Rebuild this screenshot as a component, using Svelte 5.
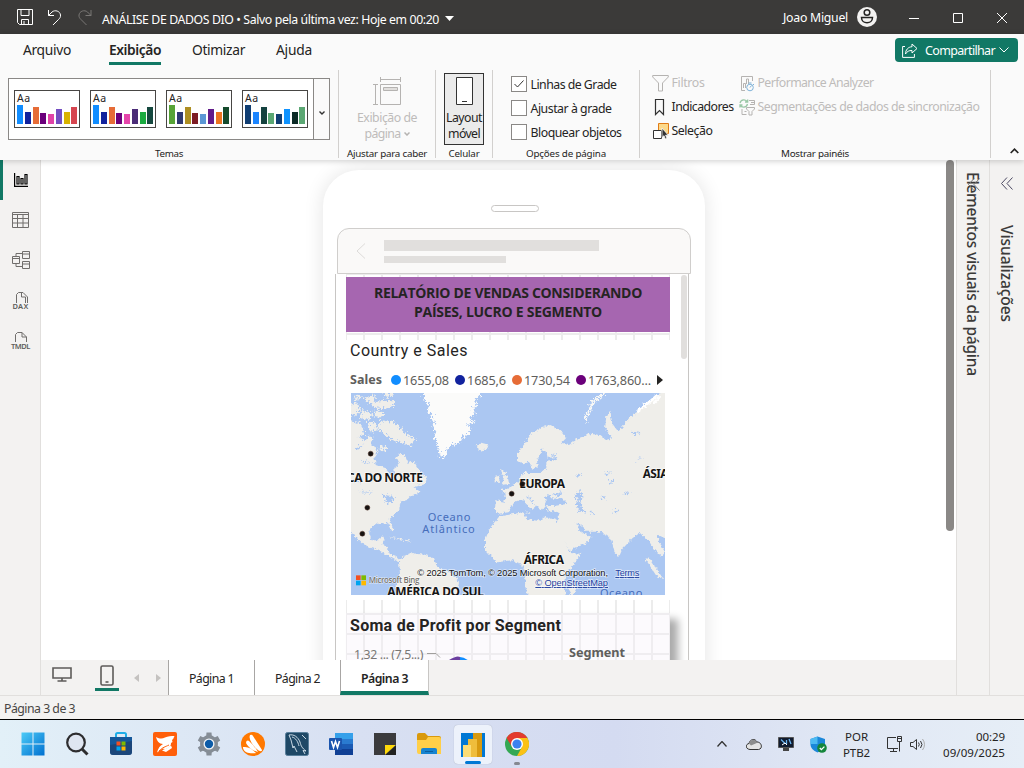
<script>
  // Spreads the letters of a label so that it takes up the given length.
  function fit(node, length) {
    const box = node.getBoundingClientRect();
    const natural = Math.max(box.width, box.height);
    node.style.letterSpacing = (length - natural) / node.textContent.length + 'px';
  }

  const themes = [
    { name: 'a', bars: [['#118dff', 19], ['#12239e', 12], ['#e66c37', 17], ['#6b007b', 11], ['#e044a7', 10], ['#744ec2', 15], ['#d9b300', 12], ['#d64550', 17]] },
    { name: 'b', bars: [['#118dff', 19], ['#12239e', 12], ['#e66c37', 17], ['#6b007b', 11], ['#e645ab', 10], ['#4b2c78', 15], ['#1aab40', 12], ['#15483f', 17]] },
    { name: 'c', bars: [['#57a336', 19], ['#2f3871', 12], ['#ad8e22', 17], ['#7d1c24', 11], ['#5b97d5', 10], ['#621b8a', 15], ['#ec7420', 12], ['#154a2c', 17]] },
    { name: 'd', bars: [['#113e72', 19], ['#1b85ff', 12], ['#15423f', 17], ['#5ba773', 11], ['#113e72', 10], ['#1093ff', 15], ['#0c2b27', 12], ['#5ba773', 17]] }
  ];
  const options = [['Linhas de Grade', 86, true], ['Ajustar à grade', 81, false], ['Bloquear objetos', 91, false]];
  const legend = [['#118dff', '1655,08', 46, 64], ['#12239e', '1685,6', 39, 57], ['#e66c37', '1730,54', 46, 64], ['#6b007b', '1763,860...', 63, 76]];
  const pages = [['Página 1', 86], ['Página 2', 86], ['Página 3', 89]];
</script>

<div class="app">
  <header class="title">
    <div class="quick">
      <svg width="16" height="16" viewBox="0 0 16 16" class="st w"><path d="M.5.5h15v15H2.500l-2-2zM4 .5v6h8v-6M4.500 15.500v-5h7v5M7 15v-3"/></svg>
      <svg width="16" height="17" viewBox="0 0 16 17" class="st w"><path d="M1.500 1v5.500H7M1.500 6.500 5 3c3-2.500 8-1 8.500 3 .2 2-.5 3-2 4.500L6 16"/></svg>
      <svg width="16" height="17" viewBox="0 0 16 17" class="st dim"><path d="M14 1v5.500H8.500M14 6.500 10.500 3c-3-2.500-8-1-8.500 3-.2 2 .5 3 2 4.500L9.500 16"/></svg>
    </div>
    <span class="doc" use:fit={337}>ANÁLISE DE DADOS DIO • Salvo pela última vez: Hoje em 00:20</span>
    <svg class="caret" width="9" height="5" viewBox="0 0 9 5"><path d="M0 0h9L4.500 5z" fill="#fff"/></svg>
    <span class="user" use:fit={65}>Joao Miguel</span>
    <svg class="avatar" width="20" height="20" viewBox="0 0 20 20"><circle cx="10" cy="10" r="10" fill="#f3f2f1"/><g fill="none" stroke="#252423" stroke-width="1.500"><circle cx="10" cy="5.500" r="2.800"/><path d="M4.500 10.500h11c0 7-11 7-11 0z"/></g></svg>
    <div class="wins">
      <svg width="10" height="10" class="st w"><path d="M0 5.500h10"/></svg>
      <svg width="10" height="10" class="st w"><path d="M.5.5h9v9h-9z"/></svg>
      <svg width="10" height="10" class="st w"><path d="m0 0 10 10M10 0 0 10"/></svg>
    </div>
  </header>

  <section class="ribbon">
    <nav>
      <span class="tab"><i use:fit={48}>Arquivo</i></span>
      <span class="tab on"><i use:fit={52}>Exibição</i></span>
      <span class="tab"><i use:fit={53}>Otimizar</i></span>
      <span class="tab"><i use:fit={36}>Ajuda</i></span>
      <button class="share">
        <svg width="16" height="15" viewBox="0 0 16 15" class="st w"><path d="M3 3.500H.6v10.900h11.800V11M10 1l5 4.500-5 4.500V7.500C7 7.300 5 8.500 3.500 11c0-4 2.500-7 6.500-7.300z"/></svg>
        <i use:fit={70}>Compartilhar</i>
        <svg width="10" height="6" viewBox="0 0 10 6" class="st w"><path d="m.5.5 4.500 4.500L9.500.5"/></svg>
      </button>
    </nav>
    <div class="groups">
      <div class="group g1">
        <div class="gallery">
          {#each themes as t (t.name)}
            <div class="theme">
              <span>Aa</span>
              <div class="bars">{#each t.bars as b}<b style="height:{b[1]}px;background:{b[0]}"></b>{/each}</div>
            </div>
          {/each}
          <div class="more"><svg width="6" height="4" viewBox="0 0 6 4" class="st k"><path d="m.5.5 2.500 2.500L5.500.5" stroke-width="1.400"/></svg></div>
        </div>
        <small><i use:fit={28}>Temas</i></small>
      </div>
      <div class="group g2">
        <svg width="30" height="30" viewBox="0 0 30 30" class="st off"><path d="M8.500 9.500h20v20h-20zM3.500 9.500v20M1 9.500h5M1 29.500h5M8.500 4.500h20M8.500 2v5M28.500 2v5"/><path d="M11.500 12.500h14v3h-14z" fill="#e1dfdd"/></svg>
        <i class="faded" use:fit={60}>Exibição de</i>
        <div class="faded line2"><i use:fit={36}>página</i><svg width="6" height="4" viewBox="0 0 6 4" class="st off"><path d="m.5.5 2.500 2.500L5.500.5" stroke-width="1.500"/></svg></div>
        <small><i use:fit={80}>Ajustar para caber</i></small>
      </div>
      <div class="group g3">
        <div class="pressed">
          <svg width="17" height="28" viewBox="0 0 17 28" class="st k"><path d="M.5.500h16v27H.5zM6 24.500h5" fill="#fff"/></svg>
          <i use:fit={36}>Layout</i>
          <i use:fit={32}>móvel</i>
        </div>
        <small><i use:fit={31}>Celular</i></small>
      </div>
      <div class="group g4">
        {#each options as o}
          <label><em>{#if o[2]}<svg width="10" height="8" viewBox="0 0 10 8" class="st k"><path d="m.5 4 3 3L9.500.5"/></svg>{/if}</em><i use:fit={o[1]}>{o[0]}</i></label>
        {/each}
        <small><i use:fit={80}>Opções de página</i></small>
      </div>
      <div class="group g5">
        <div class="cols">
          <div class="col c1">
            <div class="cmd faded"><svg width="17" height="17" viewBox="0 0 17 17" class="st off"><path d="M.7.5h15.600v1.500L10.500 8v8H6.500V8L.7 2z"/></svg><i use:fit={33}>Filtros</i></div>
            <div class="cmd"><svg width="17" height="17" viewBox="0 0 17 17" class="st k"><path d="M3.500.5h8v15l-4-4-4 4z" stroke-width="1.200"/></svg><i use:fit={62}>Indicadores</i></div>
            <div class="cmd"><svg width="17" height="17" viewBox="0 0 17 17"><path d="M6.500.500h10v10h-10z" fill="#fcd98a" stroke="#e07b16"/><path d="M1.500 7.500h8v8h-8z" fill="#fff" stroke="#333"/><path d="M10 5v9.500l2-1.800 1.300 3.300 1.700-.8-1.400-3h2.700z" fill="#333" stroke="#fafafa" stroke-width=".8"/></svg><i use:fit={41}>Seleção</i></div>
          </div>
          <div class="col">
            <div class="cmd faded"><svg width="16" height="17" viewBox="0 0 16 17" class="st off"><path d="M6 15.500H2.500v-14h11V6M4.500 13V8.500h2V13M7.500 9V4h2v5"/><g stroke="#7fb2d8"><circle cx="11" cy="12.500" r="3.300"/><path d="M9.500 8h3M11 12.500l1.500-2M14 9l1 1"/></g></svg><i use:fit={116}>Performance Analyzer</i></div>
            <div class="cmd faded"><svg width="16" height="17" viewBox="0 0 16 17" class="st off"><path d="M10 1.500h5.500v4H11M3 10v5.500h4.500M5.500 12.500h2M7.500 8.500h8v1.500L13 12.500v3.500h-3v-3.500L7.500 10zM12 3.500h3"/><g stroke="#9ac7a6" stroke-width="1.300"><path d="M1 4c1-4 6-4 7.500-1M8.700.5V3H6M8.500 5c-1 4-6 4-7.300 1M1 8.500V6h2.500"/></g></svg><i use:fit={222}>Segmentações de dados de sincronização</i></div>
          </div>
        </div>
        <small><i use:fit={68}>Mostrar painéis</i></small>
      </div>
      <svg class="fold" width="9" height="6" viewBox="0 0 9 6"><path d="m.7 5 3.800-3.800L8.300 5" fill="none" stroke="#252423" stroke-width="1.700"/></svg>
    </div>
  </section>

  <main>
    <aside class="rail">
      <div class="view on"><svg width="14" height="14" viewBox="0 0 14 14" class="st kk"><path d="M.6 0v13.400H14M3 3.500h2V11H3zM7 5.500h2V11H7zM11 1.500h2V11h-2z" stroke-width="1.200"/></svg></div>
      <div class="view"><svg width="17" height="16" viewBox="0 0 17 16" class="st g"><path d="M.5.5h16v15H.5zM.5 2.500h16M.5 6.500h16M.5 11h16M5.500 2.500v13M11 2.500v13"/></svg></div>
      <div class="view"><svg width="18" height="18" viewBox="0 0 18 18" class="st g"><path d="M.5 5.500h7v7h-7zM10.500.5h7v7h-7zM10.500 10.500h7v7h-7zM.5 7.500h7M10.500 3h7M10.500 13h7M4 5.500v-3h6.500M4 12.500v3h6.500"/></svg></div>
      <div class="view code"><svg width="17" height="16" viewBox="0 0 17 16" class="st g"><path d="M4.500 11V2.500l2-2H11l4.500 4.500v6l-2 4M9.500.5V5h4v6"/></svg><span use:fit={16}>DAX</span></div>
      <div class="view code"><svg width="17" height="16" viewBox="0 0 17 16" class="st g"><path d="M3.500 10V2.500l2-2H10l4.500 4.500v5M10 .5V5h4.500"/></svg><span use:fit={19}>TMDL</span></div>
    </aside>

    <div class="center">
      <div class="canvas">
        <div class="phone">
          <div class="speaker"></div>
          <div class="phead">
            <svg width="10" height="16" viewBox="0 0 10 16" fill="none" stroke="#dddbd9"><path d="M9 .5 1 8l8 7.500"/></svg>
            <div><p></p><p></p></div>
          </div>
          <div class="body">
            <div class="page">
              <div class="banner"><i use:fit={268}>RELATÓRIO DE VENDAS CONSIDERANDO</i><i use:fit={188}>PAÍSES, LUCRO E SEGMENTO</i></div>
              <div class="visual">
                <h3><i use:fit={118}>Country e Sales</i></h3>
                <div class="legend">
                  <strong><i use:fit={32}>Sales</i></strong>
                  {#each legend as l}
                    <span style="width:{l[3]}px"><b style="background:{l[0]}"></b><i use:fit={l[2]}>{l[1]}</i></span>
                  {/each}
                  <svg width="6" height="10" viewBox="0 0 6 10"><path d="M0 0l6 5-6 5z" fill="#252423"/></svg>
                </div>
                <svg class="map" width="314" height="202" viewBox="18 24 942 606">
                  <defs>
                    <filter id="coast" x="-5%" y="-5%" width="110%" height="110%"><feTurbulence type="fractalNoise" baseFrequency=".12" numOctaves="3" seed="4" result="n"/><feDisplacementMap in="SourceGraphic" in2="n" scale="14" xChannelSelector="R" yChannelSelector="G"/></filter>
                    <filter id="isles" x="-5%" y="-5%" width="110%" height="110%"><feTurbulence type="fractalNoise" baseFrequency=".16" numOctaves="3" seed="9" result="n"/><feDisplacementMap in="SourceGraphic" in2="n" scale="26" xChannelSelector="R" yChannelSelector="G"/></filter>
                  </defs>
                  <path d="M0 0h1000v700H0z" fill="#abc7f2"/>
                  <g fill="#efeeea" filter="url(#isles)">
                    <path d="M0 60 38 55 48 75 30 90 0 95zM55 38 88 30 90 48 70 55zM80 52 145 45 150 62 110 72 85 68zM50 75 85 85 70 105 45 100zM0 105 45 115 60 145 35 160 0 155zM68 110 90 112 98 135 75 142zM105 105 150 112 175 140 210 162 195 182 165 172 145 165 122 150 100 135zM85 80 110 80 120 95 95 98zM28 30 48 28 45 42 30 45zM115 24 150 24 140 36 120 34zM105 180 125 185 118 200 104 195zM65 155 85 155 82 168 62 168z"/>
                  </g>
                  <g fill="#efeeea" filter="url(#coast)">
                    <path d="M0 160 40 152 60 168 78 160 80 182 100 195 88 215 92 240 120 250 138 270 150 272 148 248 165 238 154 215 164 206 180 212 190 236 206 228 222 255 246 278 240 298 205 306 228 322 200 330 186 345 167 350 163 370 151 386 134 402 140 420 146 436 138 434 126 414 100 416 80 424 72 445 80 466 100 466 114 454 119 462 110 476 128 488 134 506 152 512 168 526 160 530 130 514 105 497 78 488 50 475 25 448 0 430z"/>
                    <path d="M162 530 175 514 200 504 242 510 266 520 278 548 322 566 342 590 332 650H168L150 605 166 578z"/>
                    <path d="m395 182 14-9 22 6-5 13-21 7zM468 250l12 12 10 22 2 12-22 4 6-16zM449 276l14-4v18l-14 2zM132 455l34 6 22 8-24-3zM180 464l20 4-14 4zM668 612l22-22 4 20-12 25z"/>
                    <path d="M452 346 480 350 482 326 468 316 492 310 520 290 532 270 540 258 550 264 590 264 604 248 604 230 634 226 640 216 608 218 604 200 590 190 588 205 576 225 578 245 562 254 552 230 536 238 516 226 516 206 540 175 558 146 590 126 616 120 648 136 664 158 648 176 672 180 700 160 738 146 762 150 784 166 802 160 780 130 784 92 796 80 802 116 820 140 836 120 862 92 890 70 910 50 940 26 980 15V470L935 448 946 480 960 500 948 512 925 490 910 465 884 444 862 460 832 492 822 516 808 500 798 462 785 452 765 440 728 440 700 416 692 412 706 440 740 456 720 476 674 496 656 468 630 420 642 400 640 382 608 376 604 364 632 362 668 356 650 338 625 344 612 326 600 340 604 356 590 376 574 362 552 336 542 330 572 366 560 376 532 342 506 352 490 382 462 386 450 374z"/>
                    <path d="M462 395 500 388 534 382 546 402 580 408 600 396 632 404 640 430 660 470 676 504 706 506 690 534 660 570 658 600 664 650H552L540 600 542 562 528 536 500 526 458 532 438 514 420 494 420 466 434 430z"/>
                    <path d="M900 520l15 2 20 30 20 30-20-8zM545 378l8 6-8 2z"/>
                  </g>
                  <path d="M232 10 240 50 254 60 246 80 264 88 254 102 268 108 262 126 272 140 268 158 276 172 278 190 286 205 283 214 300 218 306 196 314 184 346 172 350 156 374 146 378 130 366 118 390 112 372 98 392 88 382 74 398 60 388 44 406 32 402 10z" fill="#fbfbfa" filter="url(#isles)"/>
                  <path d="M778 26 740 55 732 80 720 98 728 112" fill="none" stroke="#f8f8f6" stroke-width="8" filter="url(#isles)"/>
                  <path d="m875 80 40-30 22-20M925 55l20-20" stroke="#fff" stroke-width="8" filter="url(#coast)"/>
                  <g fill="#abc7f2" filter="url(#isles)">
                    <path d="M690 325 710 318 712 340 704 350 720 382 700 384 696 360zM110 328 132 332 124 342 116 338zM125 336 148 334 144 348 130 356 120 352zM622 330l30-10-6 14zM765 335l16 3-4 7zM838 325l16-7-8 12zM620 210l14-6-4 10zM770 268l30-6-18 9zM690 272l22-6-12 9zM860 140l25 4-20 8zM870 230l30-20-24 14zM30 190l30-14-20 18zM50 225l30 12-26-6zM30 280l20 12-26-2zM800 380l24-4-10 6zM45 318l60 8-50-4zM790 290l18-10-6 14zM735 380l14 2-8 6z"/>
                  </g>
                  <g class="places">
                    <text x="6" y="291" textLength="228">CA DO NORTE</text>
                    <text x="523" y="309" textLength="137">EUROPA</text>
                    <text x="893" y="279" textLength="78">ÁSIA</text>
                    <text x="536" y="537" textLength="121">ÁFRICA</text>
                    <text x="127" y="632" textLength="290">AMÉRICA DO SUL</text>
                  </g>
                  <g class="seas">
                    <text x="248" y="408" textLength="128">Oceano</text>
                    <text x="232" y="444" textLength="157">Atlântico</text>
                    <text x="765" y="636" textLength="127">Oceano</text>
                  </g>
                  <g fill="#161312" stroke="#5b3a2e" stroke-width="1.500"><circle cx="77" cy="206" r="7.500"/><circle cx="67" cy="368" r="7.500"/><circle cx="52" cy="446" r="7.500"/><circle cx="500" cy="326" r="7.500"/><circle cx="532" cy="297" r="7.500"/></g>
                  <path d="M33 571h14v14H33z" fill="#f25022"/><path d="M49 571h14v14H49z" fill="#7fba00"/><path d="M33 587h14v14H33z" fill="#00a4ef"/><path d="M49 587h14v14H49z" fill="#ffb900"/>
                  <text class="bing" x="71" y="594" textLength="152">Microsoft Bing</text>
                  <g class="credit">
                    <text x="217" y="573" textLength="572">© 2025 TomTom, © 2025 Microsoft Corporation,</text>
                    <text class="link" x="811" y="573" textLength="72">Terms</text>
                    <text class="link" x="571" y="603" textLength="218">© OpenStreetMap</text>
                  </g>
                </svg>
              </div>
              <div class="profit">
                <h3><i use:fit={211}>Soma de Profit por Segment</i></h3>
                <div class="slice">
                  <i use:fit={69}>1,32 ... (7,5...)</i>
                  <svg width="50" height="12" viewBox="0 0 50 12"><path d="M4 2.500h9l4 4" fill="none" stroke="#a19f9d"/><path d="M26 9q8-5 11-3v4z" fill="#6b3fa0"/><path d="M37 6q4 0 9 4h-9z" fill="#118dff"/></svg>
                  <strong><i use:fit={56}>Segment</i></strong>
                </div>
              </div>
            </div>
            <div class="thumb"></div>
          </div>
        </div>
        <div class="scroll"></div>
      </div>
      <div class="pagebar">
        <span class="dev"><svg width="20" height="15" viewBox="0 0 20 15" fill="none" stroke="#5d5b59" stroke-width="1.600"><path d="M1 1h18v10H1zM10 11v3M5.500 14h9"/></svg></span>
        <span class="dev on"><svg width="14" height="21" viewBox="0 0 14 21" fill="none" stroke="#5d5b59" stroke-width="1.600"><rect x="1" y="1" width="12" height="19" rx="1.500"/><path d="M5.500 17h3"/></svg></span>
        <svg class="ar" width="5" height="8" viewBox="0 0 5 8"><path d="M5 0v8L0 4z" fill="#c4c2c0"/></svg>
        <svg class="ar" width="5" height="8" viewBox="0 0 5 8"><path d="M0 0v8l5-4z" fill="#c4c2c0"/></svg>
        {#each pages as p, i}
          <div class="ptab" class:on={i === 2} style="width:{p[1]}px"><i use:fit={i === 2 ? 47 : 45}>{p[0]}</i></div>
        {/each}
      </div>
    </div>

    <aside class="pane p1"><span use:fit={204}>Elementos visuais da página</span><svg class="over st" width="12" height="13" viewBox="0 0 12 13"><path d="M6 .5.500 6.500l5.500 6M11.500.5 6 6.500l5.500 6" stroke="#777"/></svg></aside>
    <aside class="pane p2"><svg width="12" height="13" viewBox="0 0 12 13" class="st"><path d="M6 .5.500 6.500l5.500 6M11.500.5 6 6.500l5.500 6" stroke="#4c4a63"/></svg><span use:fit={97}>Visualizações</span></aside>
  </main>

  <div class="status"><i use:fit={71}>Página 3 de 3</i></div>

  <footer>
    <div class="apps">
      <div><svg width="24" height="24" viewBox="0 0 24 24"><defs><linearGradient id="win" x2="1" y2="1"><stop stop-color="#4ccbf7"/><stop offset="1" stop-color="#0070d0"/></linearGradient></defs><path d="M.5.5h11v11H.5zM12.500.5h11v11h-11zM.5 12.500h11v11H.5zM12.500 12.500h11v11h-11z" fill="url(#win)"/></svg></div>
      <div><svg width="24" height="24" viewBox="0 0 24 24" fill="none" stroke="#2d2d2f" stroke-width="2.200"><circle cx="11" cy="10.500" r="8.800" fill="#dfe6f1"/><path d="m17 17 5.500 5.500" stroke-width="3"/></svg></div>
      <div><svg width="24" height="24" viewBox="0 0 24 24"><path d="M7 6V2.500Q7 1 8.500 1h7Q17 1 17 2.500V6" fill="none" stroke="#1eaee8" stroke-width="2"/><path d="M1 5h22v15q0 3-3 3H4q-3 0-3-3z" fill="#15589a"/><path d="M1 13 23 9v11q0 3-3 3H4q-3 0-3-3z" fill="#203a66" opacity=".6"/><path d="M7.500 9.500h4v4h-4z" fill="#f25022"/><path d="M12.500 9.500h4v4h-4z" fill="#7fba00"/><path d="M7.500 14.500h4v4h-4z" fill="#00a4ef"/><path d="M12.500 14.500h4v4h-4z" fill="#ffb900"/></svg></div>
      <div><svg width="24" height="24" viewBox="0 0 24 24"><rect width="24" height="24" rx="2" fill="#ff5f0a"/><path d="M3 5c4 2 6 2 9 .5 3-1.500 6-1.500 9.500-1.500-1 2-1 3-2.500 4l.5 2-1.500 1c0 5-5 7-8.500 5.500L4 20.500c1-4 3-7 6-8.500-4 0-6-3-7-7z" fill="#fff"/><path d="M9 18.500c3-2 6-2 9-5l1 2.500-6 4z" fill="#fff"/><path d="M6 19c4-4 6-4 10-6" stroke="#ff5f0a" fill="none"/></svg></div>
      <div><svg width="24" height="24" viewBox="0 0 24 24"><g fill="#858d96"><circle cx="12" cy="12" r="9"/><g id="cog"><path d="M8.500 12 9.500.5h5l1 11.500zM8.500 12l1 11.500h5l1-11.500z"/></g><use href="#cog" transform="rotate(60 12 12)"/><use href="#cog" transform="rotate(120 12 12)"/></g><circle cx="12" cy="12" r="5.500" fill="#f2f4f7"/><circle cx="12" cy="12" r="4.200" fill="#0b5ba8"/></svg></div>
      <div><svg width="24" height="24" viewBox="0 0 24 24"><circle cx="12" cy="12" r="12" fill="#ff7800"/><path d="M9 3q2-1 3 1l9 14c0 2-3 1-4 0C13 15 9 10 8.500 5zM5.500 9q1.500-1 2.500 0c3 3 6 6 9 11-5-1-10-5-12-9zM2 15h2c4 0 7 2 11 6-5 1-12 0-13-5z" fill="#fff"/></svg></div>
      <div><svg width="24" height="24" viewBox="0 0 24 24"><rect x=".5" y=".5" width="23" height="23" rx="2" fill="#1e4866" stroke="#587f9b"/><path d="M4 3c5-1 9 2 11 7 1 4 2 6 6 9l-3-.5 2 3.500M4 3l2 5 2 8 1-2 3 6M7 5c4 1 6 5 7 9M17 3l4 4" fill="none" stroke="#dce9f2" stroke-width=".9"/></svg></div>
      <div><svg width="24" height="24" viewBox="0 0 24 24"><path d="M6 1h18v6H6z" fill="#35a0ea"/><path d="M6 7h18v5H6z" fill="#2a7bd0"/><path d="M6 12h18v5H6z" fill="#1b5bb4"/><path d="M6 17h18v6H6z" fill="#103f94"/><rect y="6" width="13" height="12" rx="1" fill="#1b55ae"/><path d="m2.500 9 2 6.500 2-6 2 6 2-6.500" fill="none" stroke="#fff" stroke-width="1.600"/></svg></div>
      <div><svg width="22" height="22" viewBox="0 0 22 22"><path d="M0 0h22v12L11 22H0z" fill="#3b3b3d"/><path d="M11 12h11L11 22z" fill="#ffd90a"/><path d="M22 12v10H11z" fill="#222"/></svg></div>
      <div><svg width="24" height="24" viewBox="0 0 24 24"><path d="M0 3q0-2 2-2h6l3 3h11q2 0 2 2v6H0z" fill="#d9990c"/><path d="M0 8h9l2-3h11q2 0 2 2v15H2q-2 0-2-2z" fill="#ffcf48"/><path d="M4 22v-4q0-2 2-2h12q2 0 2 2v4z" fill="#1683d0"/><path d="M8 19.500h8" stroke="#0b5d9e"/></svg></div>
      <div class="open"><svg width="24" height="24" viewBox="0 0 24 24"><path d="M0 0h24v24H0z" fill="#0078d4"/><path d="M12 0h9v24h-9z" fill="#d89a10"/><path d="M7 6h9v18H7z" fill="#efbd3b"/><path d="M2 12h8v12H2z" fill="#fbdd76"/></svg><u></u></div>
      <div class="bg"><svg width="24" height="24" viewBox="0 0 24 24"><circle cx="12" cy="12" r="12" fill="#34a853"/><path d="M12 12V6h10.400A12 12 0 0 1 12 24l5-9z" fill="#fbc116"/><path d="M1.600 6 7 15l5-9H22.400A12 12 0 0 0 1.600 6z" fill="#e33b2e"/><circle cx="12" cy="12" r="6" fill="#fff"/><circle cx="12" cy="12" r="4.600" fill="#3b82f0"/></svg><u></u></div>
    </div>
    <div class="tray">
      <svg width="10" height="6" viewBox="0 0 10 6" class="st k"><path d="m.5 5.500 4.500-5 4.500 5" stroke-width="1.300"/></svg>
      <svg width="16" height="12" viewBox="0 0 16 12"><path d="M4 11.500C-1 11-.5 6 3 5.500 4 1 9 0 11 4c5 0 6 7 1.500 7.500z" fill="#e4e4e4" stroke="#333"/><path d="M3 5.500C4 1.500 9 .5 11 4l1 .5-7 3z" fill="#8d8d8d"/></svg>
      <svg width="16" height="14" viewBox="0 0 16 14"><path d="M.5.5h15v10H.5z" fill="#101b30" stroke="#555"/><path d="m3 2.500 4 4M8.500 3v4M11 2l2 5" stroke="#6bb4ef" stroke-width="1.300"/><path d="m4 8 3-2 2 2" stroke="#fff" fill="none"/><path d="M5 11h6v3H5z" fill="#444"/></svg>
      <svg width="17" height="17" viewBox="0 0 17 17"><path d="M7.500.5 15 3v6q-1 5-7.500 7.500Q1 14 .5 9V3z" fill="#1b87d9"/><path d="M7.500.5V8H.5V3z" fill="#4dbaf2"/><circle cx="12" cy="12" r="4.800" fill="#14863c"/><path d="m9.800 12 1.600 1.600 3-3" fill="none" stroke="#fff" stroke-width="1.300"/></svg>
      <div class="lang"><i use:fit={23}>POR</i><i use:fit={27}>PTB2</i></div>
      <svg width="16" height="17" viewBox="0 0 16 17" class="st k"><path d="M10 1.500H1.500v11H12M4 15.500h7M7.500 12.500v3M11.500.5h4v5h-4zM13.500 5.500v10M11.500 2.500h4"/></svg>
      <svg width="16" height="13" viewBox="0 0 16 13" class="st k"><path d="M.5 4.500H3l3.500-3v10l-3.500-3H.5zM8.500 4.500q1.500 2 0 4M10.500 3q3 3.500 0 7"/><path d="M12.500 1q4 5.500 0 11" stroke="#aaa"/></svg>
      <div class="clock"><i use:fit={29}>00:29</i><i use:fit={62}>09/09/2025</i></div>
    </div>
  </footer>
</div>

<style>
  :global(body) { margin: 0; overflow: hidden; }
  .app { width: 1024px; height: 768px; overflow: hidden; display: flex; flex-direction: column; font: 12.300px/16px "Noto Sans", "Open Sans", sans-serif; color: #252423; background: #f3f2f1; }
  .app * { box-sizing: border-box; }
  i, em { font-style: normal; white-space: nowrap; display: inline-block; flex: none; }
  span { white-space: nowrap; }
  svg { display: block; flex: none; }
  .st { fill: none; }
  .w { stroke: #fff; } .dim { stroke: #797775; } .k { stroke: #333; } .kk { stroke: #000; } .off { stroke: #b5b3b1; } .g { stroke: #706e6c; }

  .title { height: 34px; background: #3b3a39; color: #fff; display: flex; align-items: center; flex: none; padding-left: 17px; }
  .quick { display: flex; gap: 14px; width: 85px; flex: none; }
  .doc { margin-top: 6px; }
  .caret { margin-left: 6px; margin-top: 2px; }
  .user { margin-left: 329px; margin-top: 2px; }
  .avatar { margin-left: 9px; }
  .wins { display: flex; gap: 34px; margin-left: 32px; margin-top: 2px; }

  .ribbon { height: 126px; flex: none; background: #fafafa; box-shadow: 0 1px 6px #0003; z-index: 2; }
  nav { height: 36px; display: flex; align-items: flex-start; padding-left: 23px; font-size: 13.800px; }
  .tab { padding-top: 8px; height: 31px; margin-right: 31px; }
  .tab:first-child { margin-right: 38px; }
  .on.tab { font-weight: 600; border-bottom: 3px solid #117865; }
  .share { margin: 4px 6px 0 auto; width: 123px; height: 24px; border: 0; border-radius: 4px; background: #117865; color: #fff; display: flex; align-items: center; padding: 0 0 0 7px; font: 12.500px "Noto Sans", sans-serif; gap: 7px; }
  .share i { padding-top: 1px; }
  .share i + svg { margin-left: -3px; }
  .groups { display: flex; height: 90px; }
  .group { height: 88px; border-right: 1px solid #d2d0ce; display: flex; flex-direction: column; align-items: center; flex: none; }
  small { font-size: 9.800px; line-height: 12px; margin-top: auto; margin-bottom: -2px; display: block; }
  .g1 { width: 339px; padding-top: 8px; }
  .g2 { width: 97px; padding-top: 5px; } .g2 > i { margin-top: 5px; }
  .g3 { width: 57px; padding-top: 3px; }
  .g4 { width: 147px; padding-top: 6px; }
  .g5 { width: 351px; }
  .gallery { width: 322px; height: 62px; border: 1px solid #8a8886; background: #fff; display: flex; align-items: center; gap: 10px; padding-left: 5px; }
  .theme { width: 66px; height: 38px; border: 1px solid #484644; display: flex; flex-direction: column; padding: 2px 2px; flex: none; }
  .theme span { font-size: 10.500px; line-height: 10px; letter-spacing: .6px; height: 10px; }
  .bars { display: flex; gap: 1.750px; align-items: flex-end; height: 19px; margin-top: 2px; }
  .bars b { width: 6px; flex: none; }
  .more { border-left: 1px solid #8a8886; align-self: stretch; display: flex; align-items: center; justify-content: center; flex: 1; margin-left: -5px; background: #fafafa; padding-top: 7px; }
  .faded { color: #bebcba; }
  .line2 { display: flex; align-items: center; gap: 3px; }
  .pressed { width: 40px; height: 72px; border: 1px solid #333; background: #ebebeb; display: flex; flex-direction: column; align-items: center; padding-top: 3px; }
  .pressed svg { margin-bottom: 5px; }
  label { display: flex; gap: 4px; width: 118px; height: 24.500px; align-items: flex-start; margin-left: 7px; }
  label i { margin-top: 1px; }
  em { width: 16px; height: 16px; border: 1px solid #8a8886; background: #fff; padding: 3px 2px; }
  .cols { display: flex; width: 351px; padding: 1px 0 0 12px; }
  .c1 { width: 87px; }
  .cmd { height: 24px; display: flex; align-items: center; gap: 3px; }
  .c1 + .col { margin-left: 0; }
  .fold { margin: 78px 0 0 19px; }

  main { display: flex; height: 535px; flex: none; }
  .rail { width: 41px; border-right: 1px solid #e1dfdd; flex: none; }
  .view { height: 40px; display: flex; flex-direction: column; align-items: center; justify-content: center; border-left: 3px solid transparent; padding-right: 2px; }
  .view.on { border-color: #117865; }
  .code span { font-size: 7.500px; font-weight: 600; line-height: 6px; margin-top: -5px; color: #605e5c; background: #f3f2f1; }
  .center { width: 915px; flex: none; display: flex; flex-direction: column; }
  .canvas { height: 500px; background: #fff; overflow: hidden; display: flex; justify-content: space-between; padding-left: 282px; flex: none; }
  .scroll { width: 8px; height: 371px; background: #8a8886; border-radius: 4px; margin-right: 2px; }
  .phone { width: 382px; height: 560px; margin-top: 10px; border-radius: 36px; background: #fff; box-shadow: 0 0 20px #0000001c; padding-top: 35px; flex: none; }
  .speaker { width: 48px; height: 7px; border: 1px solid #c8c6c4; border-radius: 4px; margin-left: 168px; }
  .phead { margin: 16px 0 0 14px; width: 354px; height: 46px; border: 1px solid #d0cecc; border-radius: 12px 12px 0 0; background: #faf9f8; display: flex; padding: 11px 0 0 18px; gap: 18px; }
  .phead svg { margin-top: 3px; }
  p { margin: 0 0 5px; width: 215px; height: 11px; background: #e1dfdd; }
  p + p { width: 122px; height: 7px; }
  .body { margin-left: 12px; width: 354px; height: 450px; border: solid #c8c6c4; border-width: 0 1px; display: flex; padding-left: 10px; }
  .page { width: 324px; padding-top: 3px; background: repeating-linear-gradient(90deg, #ececec 0 1px, transparent 1px 17px, #ececec 17px 18px), repeating-linear-gradient(#ececec 0 1px, transparent 1px 19px, #ececec 19px 20px); flex: none; }
  .thumb { width: 6px; height: 84px; margin: 1px 0 0 11px; background: #e1dfdd; border-radius: 3px; }
  .banner { height: 55px; background: #a666b0; font: 700 14px/19px "Open Sans", sans-serif; display: flex; flex-direction: column; align-items: center; padding-top: 6px; }
  .visual { margin-top: 8px; height: 260px; background: #fff; padding: 1px 5px 0 4px; }
  h3 { margin: 0; font: 400 16px/20px Roboto, sans-serif; }
  .legend { display: flex; align-items: center; height: 20px; margin-top: 9px; font-size: 12.700px; color: #605e5c; }
  .legend strong { width: 41px; font-size: 12.500px; }
  .legend span { display: flex; align-items: center; gap: 2px; }
  .legend b { width: 10px; height: 10px; border-radius: 50%; flex: none; }
  .legend svg { margin-left: 5px; }
  .map { margin: 3px 0 0 1px; overflow: hidden; }
  .places { font: 700 36px "Noto Sans", sans-serif; fill: #161616; stroke: #fff9; stroke-width: 5px; paint-order: stroke; }
  .seas { font: 400 33px "Noto Sans", sans-serif; fill: #466dbb; }
  .bing { font: 600 24px "Open Sans", sans-serif; fill: #77746f; stroke: #fffa; stroke-width: 3px; paint-order: stroke; }
  .credit { font: 28px "Liberation Sans", sans-serif; fill: #111; stroke: #fff9; stroke-width: 4px; paint-order: stroke; }
  .link { fill: #1f3f9e; text-decoration: underline; }
  .profit { margin-top: 13px; height: 80px; background: #f4eef84d; box-shadow: 8px 6px 8px #0005; padding: 3px 4px; }
  .profit h3 { font-weight: 700; }
  .slice { display: flex; margin: 6px 0 0 4px; font-size: 12.300px; color: #797775; }
  .slice > i { margin-top: 5px; }
  .slice svg { margin-top: 9px; margin-right: -1px; }
  .slice strong { margin-left: 97px; font-size: 12.700px; color: #605e5c; margin-top: 2px; }
  .pagebar { height: 35px; background: #f3f2f1; display: flex; align-items: flex-start; flex: none; position: relative; z-index: 1; }
  .dev { width: 24px; height: 31px; margin-left: 9px; padding-top: 7px; display: flex; justify-content: center; }
  .dev.on { margin-left: 21px; padding-top: 5px; border-bottom: 3px solid #117865; }
  .ar { margin: 14px 0 0 15px; }
  .ar + .ar { margin: 14px 7px 0 17px; }
  .ptab { height: 35px; background: #fff; border-left: 1px solid #a8a6a4; display: flex; justify-content: center; padding-top: 11px; }
  .ptab.on { font-weight: 600; border-bottom: 4px solid #117865; border-right: 1px solid #c8c6c4; }
  .pane { border-left: 1px solid #e1dfdd; font: 500 15.500px/20px "Noto Sans", sans-serif; color: #3b3a39; flex: none; display: flex; flex-direction: column; align-items: center; }
  .pane span { writing-mode: vertical-rl; }
  .p1 { width: 33px; padding-top: 12px; position: relative; }
  .over { position: absolute; left: 11px; top: 18px; }
  .p2 { width: 35px; padding-top: 17px; }
  .p2 span { margin-top: 35px; }
  .status { height: 25px; flex: none; border-top: 1px solid #e1dfdd; border-bottom: 1px solid #000; padding: 4px; color: #484644; line-height: 17px; }

  footer { height: 48px; flex: none; background: linear-gradient(90deg, #e2f0f8, #d8e0f2 35%, #d4dbf1 60%, #e0e7f4 82%, #e6eef7); display: flex; justify-content: space-between; }
  .apps { display: flex; padding-left: 10.500px; }
  .apps div { width: 44.100px; height: 48px; display: flex; align-items: center; justify-content: center; position: relative; }
  .apps .open { width: 38px; height: 39px; margin: 5px 3px 0 3px; background: #edf2fb; border-radius: 4px; box-shadow: 0 0 1px #0004; }
  u { position: absolute; bottom: 0; width: 16px; height: 3px; border-radius: 2px; background: #0078d4; }
  .bg u { width: 6px; bottom: 3px; background: #858890; }
  .tray { display: flex; align-items: center; padding-right: 19px; }
  .tray > svg { margin-right: 16px; }
  .tray > svg:first-child { margin-right: 19px; }
  .lang, .clock { font-size: 11.500px; display: flex; flex-direction: column; align-items: center; padding-top: 1px; }
  .lang { margin-right: 16px; }
  .lang + svg { margin-right: 8px !important; }
  .clock { align-items: flex-end; margin-left: 1px; }
</style>
